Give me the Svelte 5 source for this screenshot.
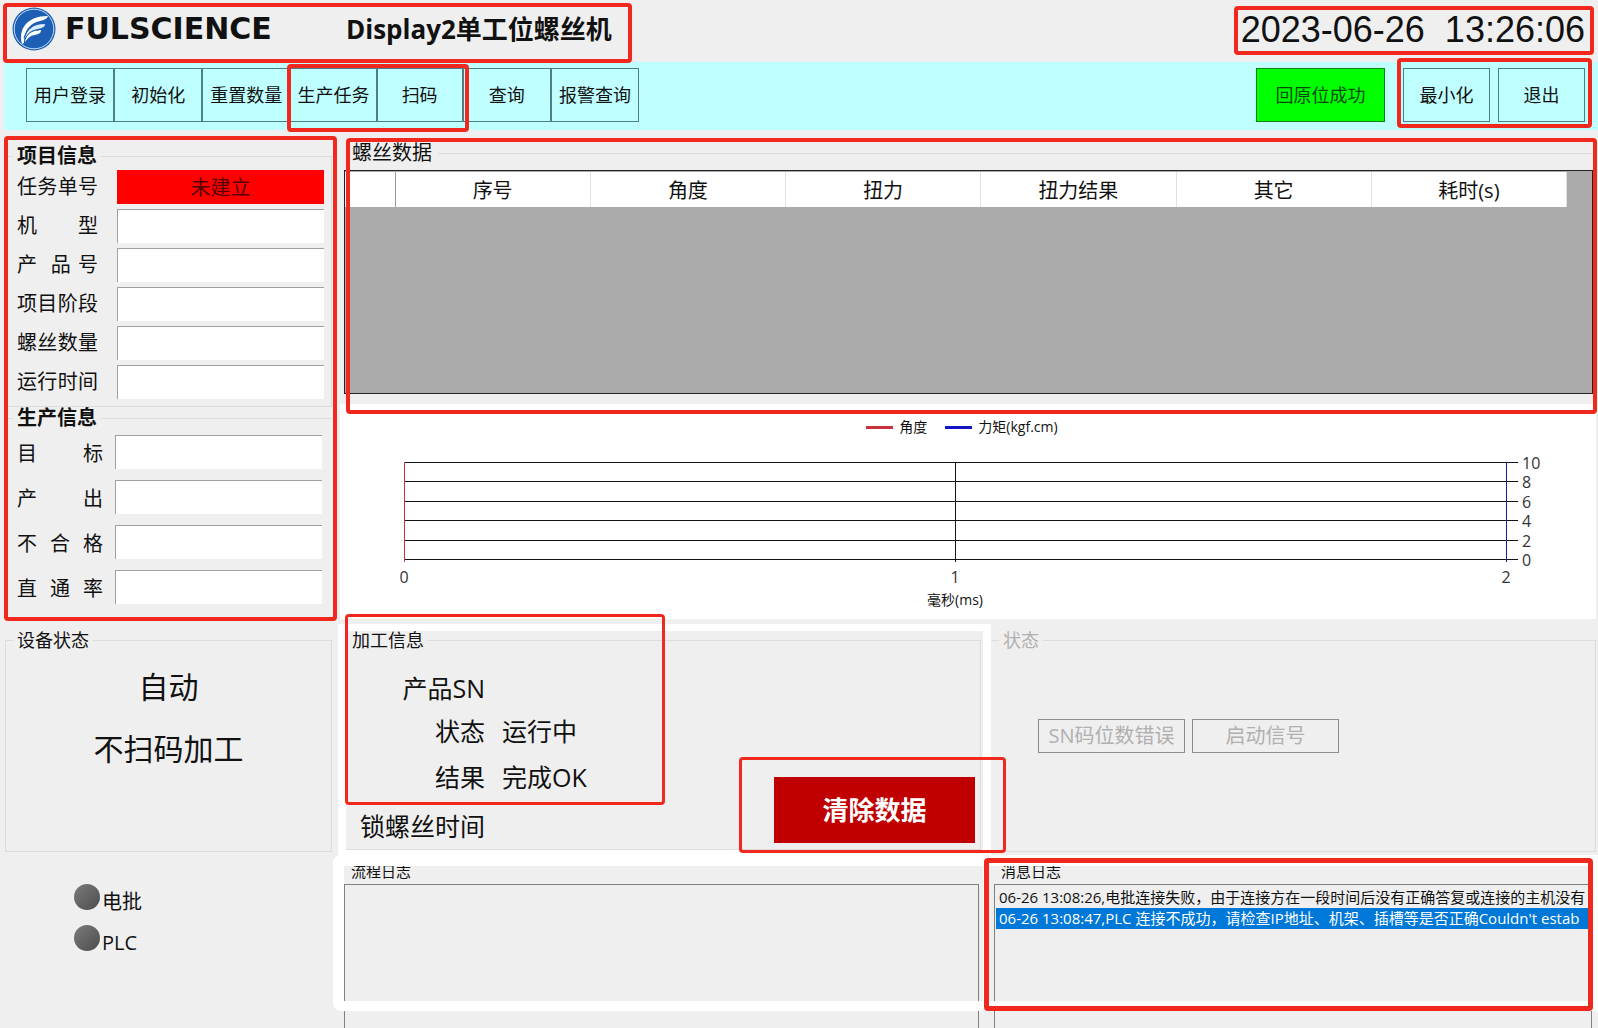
<script>
  const projectFields = ['机 型', '产  品 号', '项目阶段', '螺丝数量', '运行时间'];
  const outputFields = ['目 标', '产 出', '不 合 格', '直 通 率'];
  const columns = ['序号', '角度', '扭力', '扭力结果', '其它', '耗时(s)'];
  const torqueTicks = [10, 8, 6, 4, 2, 0];
  const timeTicks = [0, 1, 2];
  const messages = [
    '06-26 13:08:26,电批连接失败，由于连接方在一段时间后没有正确答复或连接的主机没有',
    "06-26 13:08:47,PLC 连接不成功，请检查IP地址、机架、插槽等是否正确Couldn't estab"
  ];
  let selected = $state(1);
  const plotHeight = 97;
  const tickY = (i) => Math.round((i * plotHeight) / (torqueTicks.length - 1));
</script>

<div class="app">
  <header>
    <div class="brand">
      <svg class="logo" viewBox="0 0 44 44" aria-hidden="true">
        <circle cx="22" cy="22" r="21.5" fill="#1c5fb4" />
        <circle cx="22" cy="22" r="19.8" fill="none" stroke="#c4dcf5" stroke-width="1" />
        <path d="M10 37C6 22 15 9 36 9c-1 3-4 4-8 5C18 16 12 23 12 36z" fill="#fff" />
        <path d="M13 32c1-9 8-15 20-15 0 3-3 4-7 5-6 1-10 4-13 10z" fill="#d9ecff" />
        <path d="M13 35c1-8 7-12 16-12 0 3-2 4-6 5-4 0-7 3-10 7z" fill="#fff" />
        <path d="M12 31c3-9 8-14 19-16M13 32c3-6 7-9 14-9" fill="none" stroke="#1c5fb4" stroke-width="1" />
      </svg>
      <span class="wordmark">FULSCIENCE</span>
      <h1>Display2单工位螺丝机</h1>
      <i class="mark mark-brand"></i>
    </div>
    <time>2023-06-26&nbsp; 13:26:06<i class="mark mark-time"></i></time>
  </header>

  <nav>
    <div class="menu">
      <button>用户登录</button><button>初始化</button><button>重置数量</button>
      <div class="pair">
        <button>生产任务</button><button>扫码</button>
        <i class="mark mark-task"></i>
      </div>
      <button>查询</button><button>报警查询</button>
    </div>
    <button class="home">回原位成功</button>
    <div class="window">
      <button>最小化</button><button>退出</button>
      <i class="mark mark-window"></i>
    </div>
  </nav>

  <div class="upper">
    <aside>
      <fieldset class="project">
        <legend>项目信息</legend>
        <div class="field">
          <label for="task">任务单号</label>
          <input id="task" class="missing" value="未建立" readonly />
        </div>
        {#each projectFields as name, i}
          <div class="field">
            <label for="project-{i}">{name}</label>
            <input id="project-{i}" />
          </div>
        {/each}
      </fieldset>
      <fieldset class="output">
        <legend>生产信息</legend>
        {#each outputFields as name, i}
          <div class="field">
            <label for="output-{i}">{name}</label>
            <input id="output-{i}" />
          </div>
        {/each}
      </fieldset>
      <i class="mark mark-side"></i>
    </aside>

    <main>
      <section class="screws">
        <h2>螺丝数据</h2>
        <div class="sheet">
          <table>
            <thead>
              <tr>
                <th class="stub"></th>
                {#each columns as name}<th>{name}</th>{/each}
              </tr>
            </thead>
          </table>
        </div>
        <i class="mark mark-screws"></i>
      </section>

      <section class="chart">
        <div class="key">
          <span><i class="line angle"></i>角度</span>
          <span><i class="line torque"></i>力矩(kgf.cm)</span>
        </div>
        <div class="plot">
          <svg width="100%" height="130" role="img" aria-label="角度 / 力矩(kgf.cm)">
            {#each torqueTicks as tick, i}
              <line x1="0" x2="100%" y1={tickY(i)} y2={tickY(i)} />
              <svg x="100%" y={tickY(i)} overflow="visible">
                <line x1="0" x2="12" y1="0" y2="0" />
                <text x="16" y="7">{tick}</text>
              </svg>
            {/each}
            <line x1="50%" x2="50%" y1="0" y2="100" />
            <line class="angle-axis" x1="0" x2="0" y1="0" y2="100" />
            <line class="torque-axis" x1="100%" x2="100%" y1="0" y2="100" />
            {#each timeTicks as tick}
              <text class="time" x="{tick * 50}%" y="121">{tick}</text>
            {/each}
          </svg>
        </div>
        <p>毫秒(ms)</p>
      </section>
    </main>
  </div>

  <div class="middle">
    <fieldset class="device">
      <legend>设备状态</legend>
      <p>自动</p>
      <p>不扫码加工</p>
    </fieldset>

    <div class="white">
      <div class="panel">
        <fieldset class="work">
          <legend>加工信息</legend>
          <dl>
            <dt>产品SN</dt><dd></dd>
            <dt>状态</dt><dd>运行中</dd>
            <dt>结果</dt><dd>完成OK</dd>
            <dt>锁螺丝时间</dt><dd></dd>
          </dl>
          <div class="clear">
            <button>清除数据</button>
            <i class="mark mark-clear"></i>
          </div>
        </fieldset>
        <i class="mark mark-work"></i>
      </div>
    </div>

    <fieldset class="state" disabled>
      <legend>状态</legend>
      <div class="signals">
        <button>SN码位数错误</button>
        <button>启动信号</button>
      </div>
    </fieldset>
  </div>

  <div class="lower">
    <ul class="lamps">
      <li><i></i><span>电批</span></li>
      <li><i></i><span>PLC</span></li>
    </ul>
    <section class="log flow">
      <h3>流程日志</h3>
      <div class="list"></div>
    </section>
    <section class="log news">
      <h3>消息日志</h3>
      <div class="list">
        {#each messages as text, i}
          <button class:selected={selected === i} onclick={() => (selected = i)}>{text}</button>
        {/each}
      </div>
      <i class="mark mark-news"></i>
    </section>
  </div>
</div>

<style>
  :global(body) {
    margin: 0;
    background: #efefef;
  }
  .app {
    box-sizing: border-box;
    min-height: 100vh;
    display: flex;
    flex-direction: column;
    overflow: hidden;
    background: #efefef;
    color: #111;
    font: 20px/22px 'Open Sans', 'Noto Sans CJK SC', sans-serif;
  }
  .app :global(*) {
    box-sizing: border-box;
  }
  h1, h2, h3, p, dl, dd, ul, fieldset {
    margin: 0;
    padding: 0;
  }
  fieldset {
    min-width: 0;
    border: 1px solid #dcdcdc;
  }
  legend {
    padding: 0 4px;
  }
  button {
    font: inherit;
    color: inherit;
    padding: 0;
    border-radius: 0;
    white-space: nowrap;
  }
  .mark {
    position: absolute;
    z-index: 5;
    border: 4px solid #f0281e;
    border-radius: 4px;
    pointer-events: none;
  }

  /* title bar */
  header {
    display: flex;
    justify-content: space-between;
    height: 62px;
  }
  .brand {
    position: relative;
    display: flex;
    align-items: center;
    width: 632px;
    padding: 0 0 4px 12px;
  }
  .logo {
    width: 44px;
    height: 44px;
  }
  .wordmark {
    width: 290px;
    padding-left: 9px;
    font: bold 30px/32px 'DejaVu Sans', sans-serif;
  }
  h1 {
    font-size: 26px;
    line-height: 32px;
    white-space: nowrap;
  }
  .mark-brand {
    inset: 3px 0 -1px 3px;
  }
  time {
    position: relative;
    padding: 6px 13px 0 7px;
    font: 36px/48px 'Liberation Sans', sans-serif;
    white-space: nowrap;
  }
  .mark-time {
    inset: 6px 4px 7px 0;
  }

  /* tool bar */
  nav {
    display: flex;
    height: 68px;
    margin-left: 4px;
    padding: 6px 13px 8px 22px;
    background: #c0ffff;
    font-size: 18px;
  }
  nav button {
    flex: 1;
    height: 54px;
    border: 1px solid #4f7f86;
    background: transparent;
  }
  .menu {
    display: flex;
    width: 613px;
    margin-right: auto;
  }
  .pair {
    position: relative;
    flex: 2;
    display: flex;
  }
  .mark-task {
    inset: -4px -6px -10px -3px;
  }
  nav .home {
    flex: none;
    width: 129px;
    margin-right: 18px;
    border-color: #108010;
    background: #00ff00;
    color: #064a06;
  }
  .window {
    position: relative;
    display: flex;
    gap: 8px;
    width: 182px;
  }
  .mark-window {
    inset: -10px -7px -6px -6px;
  }

  /* job data, screw table and chart */
  .upper {
    display: grid;
    grid-template-columns: 340px 1fr;
  }
  aside {
    position: relative;
    padding: 15px 8px 0 5px;
  }
  .mark-side {
    inset: 6px 3px -2px 4px;
  }
  .project, .output {
    padding-left: 11px;
  }
  .project {
    padding-bottom: 5px;
  }
  .output {
    border-width: 1px 0 0 1px;
  }
  aside legend {
    margin-left: -4px;
    font-weight: bold;
  }
  .field {
    display: flex;
    justify-content: space-between;
    align-items: center;
    height: 39px;
    padding-right: 7px;
  }
  .output .field {
    height: 45px;
    padding-right: 10px;
  }
  .field label {
    width: 81px;
    text-align-last: justify;
    white-space: pre-wrap;
  }
  .output label {
    width: 86px;
    padding-top: 4px;
  }
  .field input {
    width: 207px;
    height: 34px;
    padding: 0 4px;
    border: solid #a0a0a0;
    border-width: 1px 0 0 1px;
    border-radius: 0;
    background: #fff;
    font: inherit;
  }
  .field .missing {
    border: 0;
    background: #ff0000;
    color: #500;
    text-align: center;
  }
  .screws {
    position: relative;
    padding: 12px 5px 10px 4px;
  }
  h2 {
    display: flex;
    align-items: center;
    gap: 6px;
    margin-bottom: 6px;
    padding-left: 8px;
    font-size: 20px;
    font-weight: normal;
  }
  h2::after {
    content: '';
    flex: 1;
    border-top: 1px solid #dcdcdc;
  }
  .sheet {
    height: 224px;
    padding: 1px 25px 0 0;
    border: 1px solid #222;
    background: #ababab;
  }
  table {
    width: 100%;
    table-layout: fixed;
    border-collapse: collapse;
    background: #fff;
  }
  th {
    height: 35px;
    padding: 2px 0 0;
    border-right: 1px solid #e0e0e0;
    font-weight: normal;
  }
  .stub {
    width: 50px;
    border-right-color: #999;
  }
  .mark-screws {
    inset: 8px 1px -10px 6px;
  }
  .chart {
    height: 215px;
    margin-right: 2px;
    padding: 12px 90px 0 64px;
    background: #fff;
    font-size: 14px;
  }
  .key {
    display: flex;
    justify-content: center;
    gap: 18px;
    height: 22px;
    margin-bottom: 24px;
    padding-left: 14px;
  }
  .key span {
    display: flex;
    align-items: center;
    gap: 6px;
  }
  .line {
    width: 27px;
    border-top: 3px solid #c8323c;
  }
  .torque {
    border-color: #1414c8;
  }
  .plot svg {
    display: block;
    overflow: visible;
  }
  .plot line {
    stroke: #111;
    stroke-width: 1;
    shape-rendering: crispEdges;
  }
  .plot .angle-axis {
    stroke: #c8323c;
  }
  .plot .torque-axis {
    stroke: #1c1c96;
  }
  .plot text {
    fill: #333;
    font-size: 16px;
  }
  .plot .time {
    text-anchor: middle;
  }
  .chart p {
    margin-top: -3px;
    text-align: center;
  }

  /* machine state row */
  .middle {
    display: grid;
    grid-template-columns: 338px 653fr 607fr;
    height: 236px;
    font-size: 18px;
  }
  .device {
    margin: 9px 6px 3px 5px;
    padding-top: 4px;
  }
  .device legend {
    margin-left: 7px;
    line-height: 24px;
  }
  .device p {
    font-size: 30px;
    line-height: 62px;
    text-align: center;
  }
  .white {
    margin-top: 5px;
    padding: 7px 8px 5px;
    background: #fff;
  }
  .panel {
    position: relative;
    height: 219px;
    padding-right: 2px;
    background: #efefef;
  }
  .work {
    display: flex;
    justify-content: space-between;
    align-items: flex-end;
    height: 100%;
    border-width: 1px 1px 1px 0;
  }
  .work legend {
    margin-left: 2px;
    line-height: 18px;
  }
  dl {
    display: grid;
    grid-template-columns: 125px auto;
    grid-template-rows: 43px 46px 49px 46px;
    column-gap: 17px;
    padding-left: 14px;
    font-size: 25px;
    line-height: 46px;
    white-space: nowrap;
  }
  dt {
    text-align: right;
  }
  .clear {
    position: relative;
    margin: 0 5px 6px 0;
  }
  .clear button {
    width: 201px;
    height: 66px;
    border: 0;
    background: #c00000;
    color: #fff;
    font-size: 26px;
    font-weight: bold;
  }
  .mark-clear {
    inset: -20px -31px -10px -35px;
    border-width: 3px;
  }
  .mark-work {
    top: -17px;
    bottom: 45px;
    left: -1px;
    width: 320px;
    border-width: 3px;
  }
  .state {
    margin: 9px 2px 3px 0;
    border-left: 0;
    color: #b0b0b0;
  }
  .state legend {
    margin-left: 8px;
    line-height: 24px;
  }
  .signals {
    display: flex;
    gap: 7px;
    padding: 67px 0 0 47px;
    font-size: 20px;
  }
  .signals button {
    width: 147px;
    height: 34px;
    border: 1px solid #8c8c8c;
    background: transparent;
  }

  /* lamps and logs */
  .lower {
    flex: 1;
    display: grid;
    grid-template-columns: 333px 656fr 609fr;
    min-height: 173px;
  }
  .lamps {
    padding: 29px 0 0 74px;
    list-style: none;
  }
  .lamps li {
    display: flex;
    gap: 2px;
    height: 41px;
  }
  .lamps i {
    width: 26px;
    height: 26px;
    border-radius: 50%;
    background: linear-gradient(135deg, #7c7c7c, #4c4c4c);
  }
  .lamps span {
    padding-top: 7px;
  }
  .log {
    position: relative;
    display: flex;
    flex-direction: column;
    min-width: 0;
    padding: 9px 10px 0 11px;
  }
  .log::before {
    content: '';
    position: absolute;
    inset: 0 0 17px;
    z-index: 1;
    border: 11px solid #fff;
    border-right-width: 6px;
    border-bottom-width: 10px;
    border-radius: 8px;
    pointer-events: none;
  }
  h3 {
    height: 20px;
    padding-left: 7px;
    font-size: 15px;
    font-weight: normal;
    line-height: 14px;
  }
  .list {
    flex: 1;
    padding: 2px 0 0 1px;
    overflow: hidden;
    border: 1px solid #808080;
    border-bottom: 0;
  }
  .news {
    padding: 9px 6px 0 5px;
  }
  .news::before {
    border-left-width: 0;
    border-radius: 0;
  }
  .list button {
    display: block;
    width: 100%;
    height: 21px;
    padding-left: 3px;
    overflow: hidden;
    border: 0;
    background: transparent;
    font-size: 15px;
    line-height: 21px;
    text-align: left;
  }
  .list .selected {
    background: #0078d7;
    color: #fff;
  }
  .mark-news {
    inset: 3px 5px 17px -5px;
    border-width: 5px;
  }
</style>
